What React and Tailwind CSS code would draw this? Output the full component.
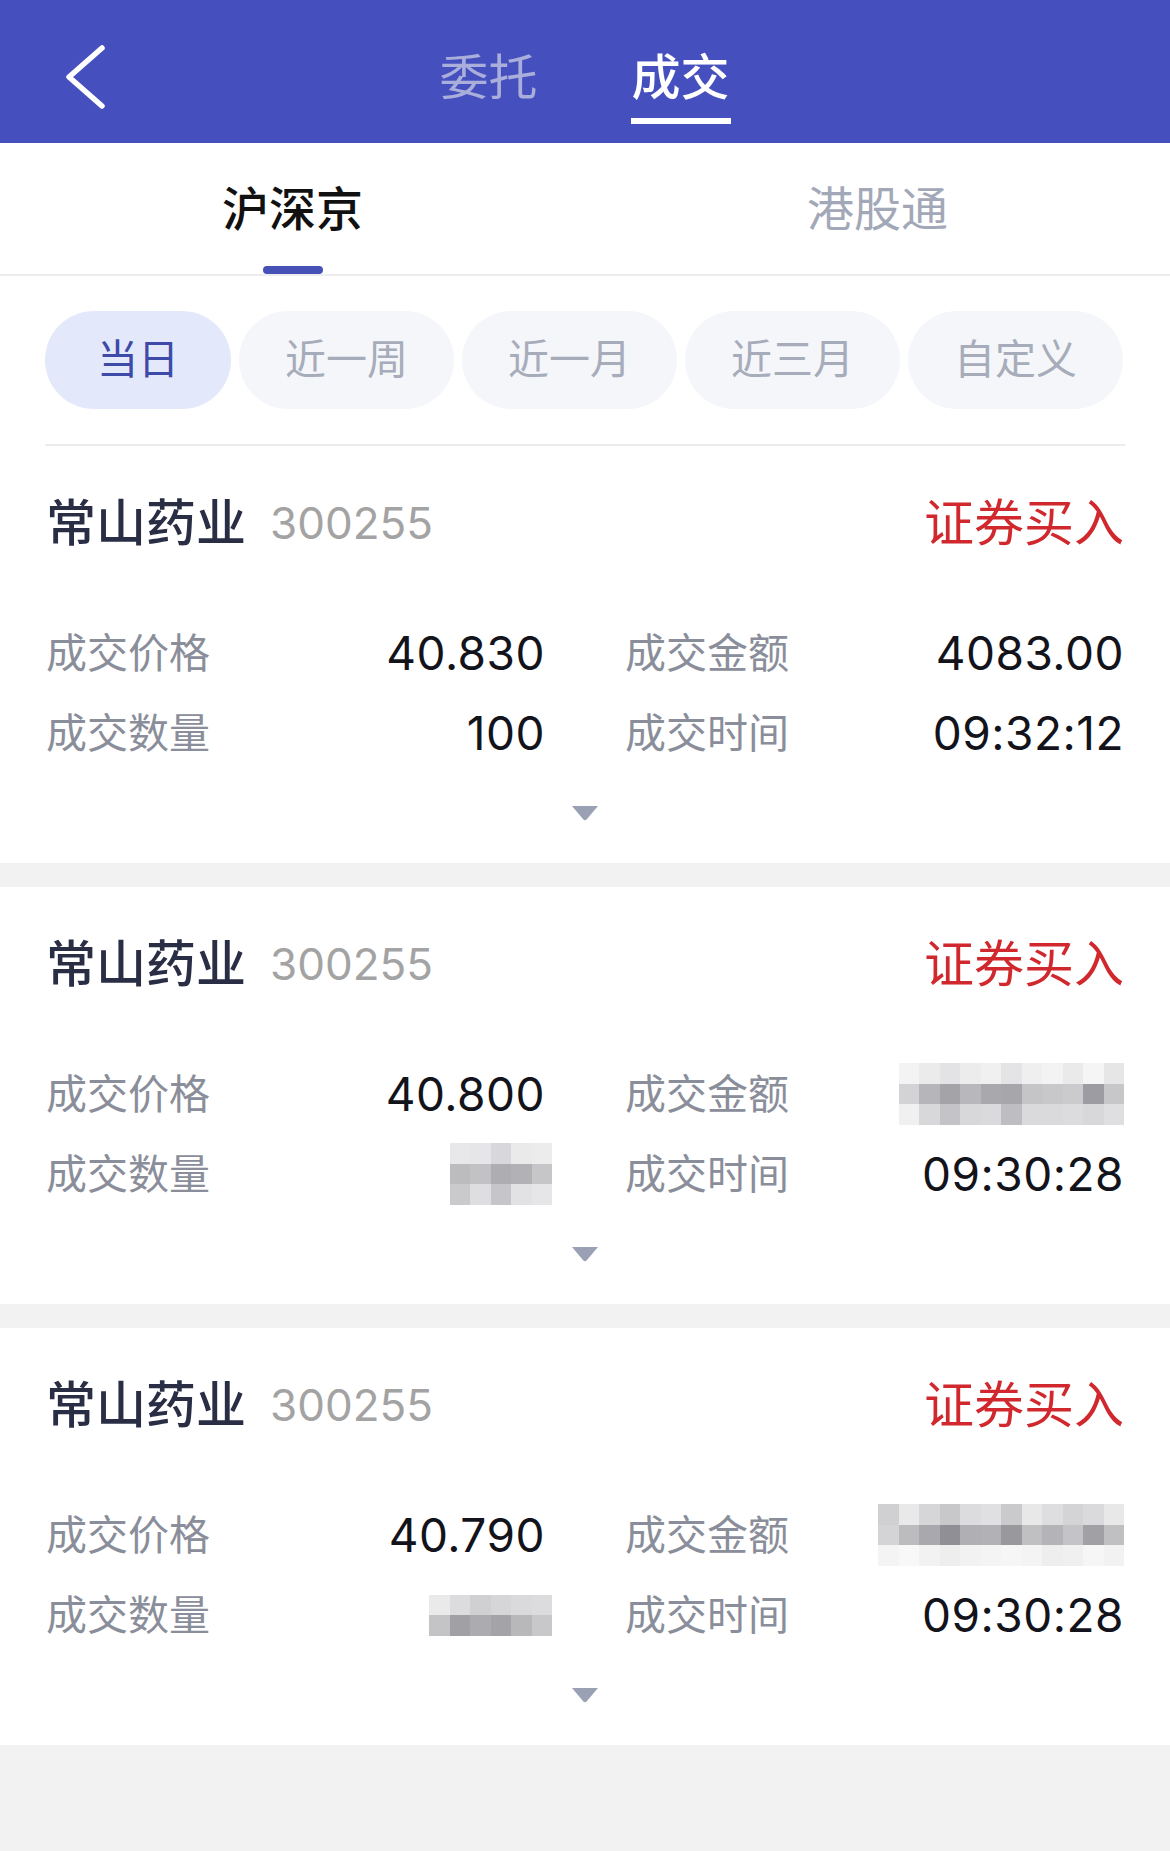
import React from 'react';

const chips = ['当日', '近一周', '近一月', '近三月', '自定义'];

const blurA = [
  ['#f3f3f3', '#ebebec', '#e3e3e5', '#ececed', '#f0f0f0', '#e4e4e6', '#efefef', '#f3f3f3', '#eaeaea', '#f5f5f5', '#e6e6e7'],
  ['#d3d3d6', '#b6b6ba', '#a3a3a8', '#b8b8bc', '#a8a8ad', '#a6a6ab', '#c5c5c8', '#c8c8cb', '#cbcbce', '#9c9ca2', '#c7c7ca'],
  ['#f0f0f0', '#d8d8da', '#c4c4c8', '#d8d8da', '#dadadc', '#bebec2', '#dadadc', '#dadadc', '#dcdcde', '#d8d8da', '#dfdfe1'],
];

const blurQ = [
  ['#e8e8ea', '#e6e6e8', '#d8d8dc', '#eaeaea', '#ececec'],
  ['#bcbcbf', '#c2c2c5', '#aeaeb2', '#b2b2b6', '#c6c6c9'],
  ['#cacacd', '#dedee0', '#c6c6ca', '#e2e2e4', '#e6e6e8'],
];

const blurA3 = [
  ['#d0d0d3', '#e9e9ea', '#d6d6d8', '#c8c8cb', '#dcdcde', '#e0e0e2', '#cacacd', '#e8e8e9', '#dedee0', '#d4d4d6', '#dadadc', '#e8e8e8'],
  ['#d4d4d6', '#bcbcbf', '#a9a9ad', '#8f8f95', '#b0b0b4', '#b2b2b6', '#98989d', '#c0c0c3', '#b4b4b8', '#c4c4c7', '#a0a0a5', '#c0c0c3'],
  ['#f4f4f4', '#f8f8f8', '#f2f2f2', '#eeeeee', '#f2f2f2', '#f4f4f4', '#f6f6f6', '#f4f4f4', '#eeeeee', '#f0f0f0', '#f6f6f6', '#f2f2f2'],
];

const blurQ3 = [
  ['#eaeaea', '#dcdcde', '#d0d0d3', '#d6d6d8', '#dadadc', '#dcdcde'],
  ['#c4c4c7', '#a0a0a5', '#acacb0', '#a4a4a8', '#b8b8bb', '#c8c8cb'],
];

const Mosaic = ({ rows, overhang }) => (
  <div className={overhang ? 'flex flex-col -mr-[7px]' : 'flex flex-col'}>
    {rows.map((row, i) => (
      <div key={i} className="flex">
        {row.map((c, j) => (
          <div key={j} className="w-[20.5px] h-[20.5px]" style={{ backgroundColor: c }} />
        ))}
      </div>
    ))}
  </div>
);

const Field = ({ label, value, blur, overhang }) => (
  <div className="flex items-center justify-between h-[56px]">
    <span className="text-[41px] leading-[56px] text-[#8a8e9a]">{label}</span>
    {blur ? (
      <Mosaic rows={blur} overhang={overhang} />
    ) : (
      <span className="text-[46px] leading-[56px] text-[#13131b] tracking-[0.5px]">{value}</span>
    )}
  </div>
);

const Card = ({ price, amount, qty, time, amountBlur, qtyBlur }) => (
  <div className="bg-white pt-[49px] pb-[42px]">
    <div className="flex items-center justify-between px-[46px] h-[56px]">
      <div className="flex items-center gap-[24px]">
        <span className="text-[50px] leading-[56px] font-medium text-[#2a2e45]">常山药业</span>
        <span className="text-[44px] leading-[56px] text-[#a3a3a3]">300255</span>
      </div>
      <span className="text-[50px] leading-[56px] text-[#d0282d]">证券买入</span>
    </div>
    <div className="grid grid-cols-2 gap-x-[80px] gap-y-[24px] px-[46px] mt-[74px]">
      <Field label="成交价格" value={price} />
      <Field label="成交金额" value={amount} blur={amountBlur} />
      <Field label="成交数量" value={qty} blur={qtyBlur} overhang />
      <Field label="成交时间" value={time} />
    </div>
    <div className="flex justify-center mt-[44px]">
      <svg width="28" height="16" viewBox="0 0 28 16">
        <path d="M1 1 L27 1 L15.6 14.6 Q14 16 12.4 14.6 Z" fill="#9aa1b5" />
      </svg>
    </div>
  </div>
);

export default function App() {
  return (
    <div
      className="min-h-screen w-full bg-[#f2f2f2]"
      style={{ fontFamily: 'Inter, "Noto Sans CJK SC", sans-serif' }}
    >
      {/* Top bar */}
      <div className="relative h-[143px] bg-[#464fbe]">
        <svg className="absolute left-[62px] top-[44px]" width="46" height="66" viewBox="0 0 46 66">
          <polyline points="40,4 7,33 40,62" fill="none" stroke="#ffffff" strokeWidth="5.5" strokeLinecap="round" strokeLinejoin="round" />
        </svg>
        <div className="flex justify-center gap-[93px] pt-[50px]">
          <div className="flex flex-col items-center">
            <span className="text-[49px] leading-[56px] text-[#a9aedb]">委托</span>
          </div>
          <div className="flex flex-col items-center">
            <span className="text-[49px] leading-[56px] text-white font-medium">成交</span>
            <div className="w-[100px] h-[6px] bg-white mt-[12px]" />
          </div>
        </div>
      </div>

      {/* Market tabs */}
      <div className="flex h-[133px] bg-white border-b-2 border-[#ededed]">
        <div className="flex-1 flex flex-col items-center justify-between pt-[38px]">
          <span className="text-[47px] leading-[56px] text-[#111111] font-medium">沪深京</span>
          <div className="w-[60px] h-[8px] rounded-full bg-[#4651b8]" />
        </div>
        <div className="flex-1 flex flex-col items-center pt-[38px]">
          <span className="text-[47px] leading-[56px] text-[#a3a8b8]">港股通</span>
        </div>
      </div>

      {/* Period chips */}
      <div className="bg-white pt-[35px]">
        <div className="flex gap-[8px] px-[45px]">
          {chips.map((c, i) => (
            <div
              key={c}
              className={
                i === 0
                  ? 'w-[186px] h-[98px] rounded-full bg-[#e3e8fb] text-[#3d4aa8] flex items-center justify-center text-[41px]'
                  : 'w-[215px] h-[98px] rounded-full bg-[#f5f6fa] text-[#a7acba] flex items-center justify-center text-[41px]'
              }
            >
              {c}
            </div>
          ))}
        </div>
        <div className="mx-[45px] mt-[35px] h-[2px] bg-[#ececec]" />
      </div>

      {/* Trades */}
      <div className="flex flex-col gap-[24px]">
        <Card price="40.830" amount="4083.00" qty="100" time="09:32:12" />
        <Card price="40.800" time="09:30:28" amountBlur={blurA} qtyBlur={blurQ} />
        <Card price="40.790" time="09:30:28" amountBlur={blurA3} qtyBlur={blurQ3} />
      </div>
    </div>
  );
}
